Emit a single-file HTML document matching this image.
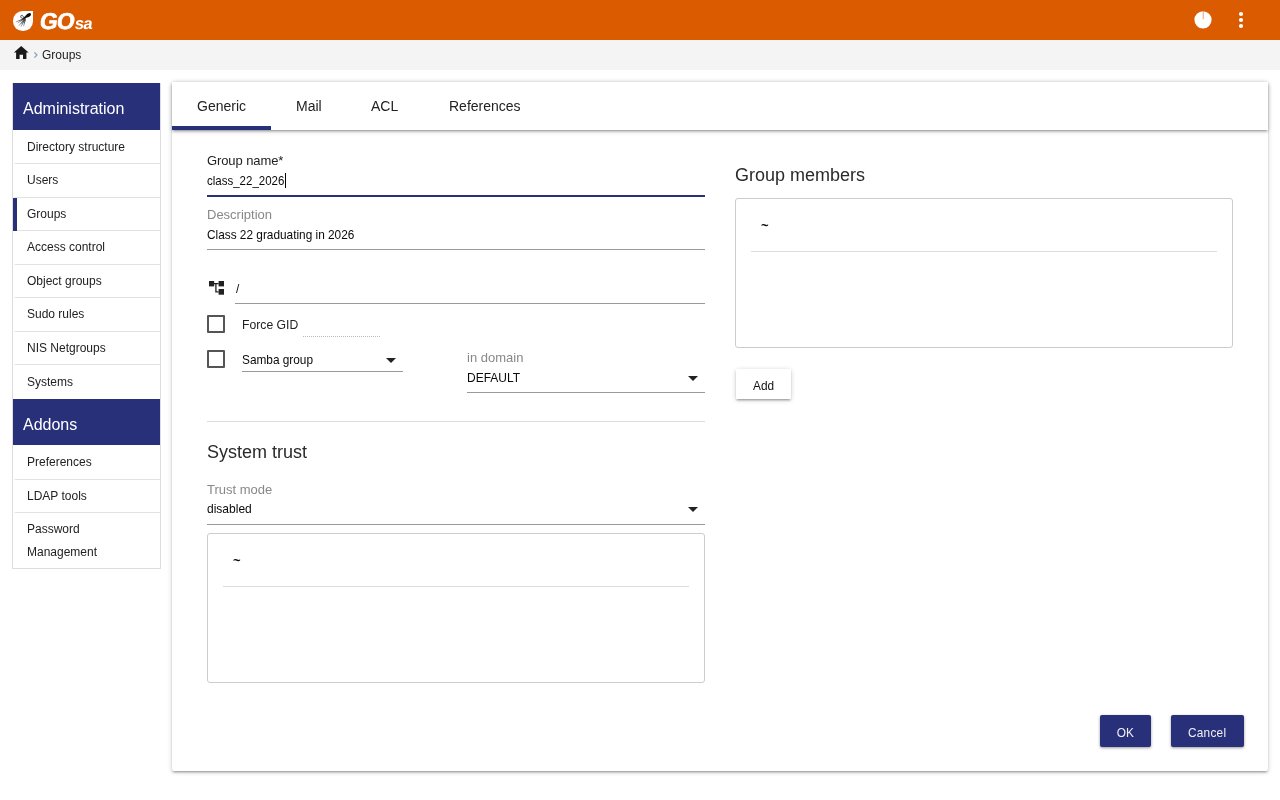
<!DOCTYPE html>
<html><head><meta charset="utf-8">
<style>
*{box-sizing:border-box;margin:0;padding:0}
html,body{width:1280px;height:800px;overflow:hidden;background:#fff;-webkit-font-smoothing:antialiased;font-family:"Liberation Sans",sans-serif;color:#222}
.abs{position:absolute}
#hdr{position:absolute;left:0;top:0;width:1280px;height:40px;background:#db5b00}
#crumb{position:absolute;left:0;top:40px;width:1280px;height:30px;background:#f4f4f4}
#side{position:absolute;left:12px;top:83px;width:149px;height:486px;border:1px solid #ddd;border-top:none;background:#fff}
.sh{position:absolute;left:0;width:147px;background:#29307a;color:#fff;font-size:16px;line-height:50px;padding-left:10px;padding-top:1px}
.si{position:absolute;left:0;width:147px;font-size:12px;padding-left:14px;color:#222}
.bb::after{content:"";position:absolute;left:1px;right:0;bottom:0;height:1px;background:linear-gradient(to right,rgba(226,226,226,.3),#e2e2e2 2px)}
#main{position:absolute;left:172px;top:82px;width:1096px;height:689px;background:#fff;box-shadow:0 2px 2px 0 rgba(0,0,0,.14),0 3px 1px -2px rgba(0,0,0,.12),0 1px 5px 0 rgba(0,0,0,.2);border-radius:2px}
#inner{position:absolute;left:0;top:1px;width:1096px;height:688px}
#tabs{position:absolute;left:0;top:-1px;width:1096px;height:48px;box-shadow:0 2px 2px 0 rgba(0,0,0,.14),0 3px 1px -2px rgba(0,0,0,.12),0 1px 5px 0 rgba(0,0,0,.2);background:#fff}
.tab{position:absolute;top:1px;height:47px;line-height:46px;font-size:14px;color:#222}
.lbl{position:absolute;font-size:13px;color:#222}
.glbl{position:absolute;font-size:13px;color:#888}
.val{position:absolute;font-size:13px;color:#0a0a0a}
.line{position:absolute;height:1px;background:#999}
.cb{position:absolute;width:18px;height:18px;border:2px solid #555;border-radius:1px}
.arrow{position:absolute;width:0;height:0;border-left:5.5px solid transparent;border-right:5.5px solid transparent;border-top:5.5px solid #222}
.h2{position:absolute;font-size:18px;color:#2a2a2a}
.cv{display:inline-block;transform:scaleX(0.91);transform-origin:0 0;white-space:nowrap}
.box{position:absolute;border:1px solid #ccc;border-radius:3px}
.btn{position:absolute;background:#29307a;color:#f0f0f4;font-size:13px;text-align:center;border-radius:2px;box-shadow:0 1px 3px rgba(0,0,0,.4)}
</style></head><body><div style="position:absolute;left:0;top:0;width:1280px;height:800px;will-change:transform">
<div id="hdr">
  <div class="abs" style="left:13px;top:11px;width:19.5px;height:19.5px;background:#fff;border-radius:50% 0 50% 50%"></div>
  <svg class="abs" style="left:13px;top:11px" width="20" height="20" viewBox="0 0 20 20">
    <defs><linearGradient id="tg" x1="1" y1="0" x2="0" y2="1"><stop offset="0.2" stop-color="#333"/><stop offset="1" stop-color="#bbb"/></linearGradient></defs>
    <ellipse cx="15.4" cy="4.2" rx="2.9" ry="1.7" transform="rotate(-30 15.4 4.2)" fill="#0a0a0a"/>
    <path d="M13.6 5.2 L11 7.6" stroke="#151515" stroke-width="2" stroke-linecap="round"/>
    <g stroke="url(#tg)" stroke-width="1" stroke-linecap="round" fill="none">
      <path d="M11 7.5 L5 12"/>
      <path d="M11.3 8 L6 14.5"/>
      <path d="M11.8 8.5 L8 15.5"/>
      <path d="M12.3 8.8 L10.5 15"/>
      <path d="M10.5 8 L3.2 10.8"/>
      <path d="M11.5 9 L7.8 13"/>
      <path d="M12.5 8.5 L12.5 13.5"/>
    </g>
    <path d="M10 7.8 C7.6 7.6 7.2 4.4 8.6 4.3 C9.8 4.2 10.6 5.5 10.3 6.8" stroke="#222" stroke-width="0.8" fill="none"/>
  </svg>
  <div class="abs" style="left:40px;top:6px;font-size:23px;font-weight:bold;color:#fff;line-height:30px;transform:skewX(-8deg);letter-spacing:-0.8px;-webkit-text-stroke:0.6px #fff">GO</div>
  <div class="abs" style="left:75px;top:11px;font-size:16.5px;font-weight:bold;color:#fff;line-height:24px;transform:skewX(-8deg);letter-spacing:-0.7px">sa</div>
  <svg class="abs" style="left:1192px;top:8px" width="24" height="24" viewBox="0 0 24 24">
    <circle cx="11" cy="11.8" r="8.6" fill="#fff"/>
    <rect x="10.8" y="3" width="0.7" height="8.2" fill="#e07a30"/>
  </svg>
  <svg class="abs" style="left:1236px;top:10px" width="10" height="20" viewBox="0 0 10 20">
    <circle cx="5" cy="4" r="2.1" fill="#fff"/>
    <circle cx="5" cy="10" r="2.1" fill="#fff"/>
    <circle cx="5" cy="16" r="2.1" fill="#fff"/>
  </svg>
</div>
<div id="crumb">
  <svg class="abs" style="left:13px;top:5px" width="17" height="15" viewBox="0 0 17 15">
    <path d="M8.2 0.9 L15.6 7.4 L13.4 7.4 L13.4 13.9 L10 13.9 L10 9.8 L6.6 9.8 L6.6 13.9 L3.1 13.9 L3.1 7.4 L0.9 7.4 Z" fill="#1a1a1a"/>
  </svg>
  <svg class="abs" style="left:33px;top:11px" width="6" height="8" viewBox="0 0 6 8">
    <path d="M1.4 1.4 L4 4 L1.4 6.6" stroke="#8a9db5" stroke-width="1.2" fill="none"/>
  </svg>
  <div class="abs" style="left:42px;top:7px;font-size:12px;line-height:16px;color:#222">Groups</div>
</div>
<div id="side">
  <div class="sh" style="top:0;height:47px">Administration</div>
  <div class="si bb" style="top:47px;height:34px;line-height:33px;padding-top:1px">Directory structure</div>
  <div class="si bb" style="top:81px;height:34px;line-height:33px">Users</div>
  <div class="si bb" style="top:115px;height:33px;line-height:32px">Groups</div>
  <div class="si bb" style="top:148px;height:34px;line-height:33px">Access control</div>
  <div class="si bb" style="top:182px;height:33px;line-height:32px">Object groups</div>
  <div class="si bb" style="top:215px;height:34px;line-height:33px">Sudo rules</div>
  <div class="si bb" style="top:249px;height:33px;line-height:32px">NIS Netgroups</div>
  <div class="si" style="top:282px;height:34px;line-height:34px">Systems</div>
  <div class="abs" style="left:0;top:115px;width:4px;height:33px;background:#29307a"></div>
  <div class="sh" style="top:316px;height:46px">Addons</div>
  <div class="si bb" style="top:362px;height:35px;line-height:34px">Preferences</div>
  <div class="si bb" style="top:397px;height:33px;line-height:32px">LDAP tools</div>
  <div class="si" style="top:430px;height:55px;line-height:23px;padding-top:5px">Password<br>Management</div>
</div>
<div id="main"><div id="inner">
  <div id="tabs">
    <div class="tab" style="left:25px">Generic</div>
    <div class="tab" style="left:124px">Mail</div>
    <div class="tab" style="left:199px">ACL</div>
    <div class="tab" style="left:277px">References</div>
  </div>

  <div id="tabline" class="abs" style="left:0;top:43px;width:99px;height:4px;background:#29307a"></div>
  <!-- left column -->
  <div class="lbl" style="left:35px;top:70px;letter-spacing:-0.1px">Group name*</div>
  <div class="val" style="left:35px;top:90px"><span class="cv" style="transform:scaleX(0.885)">class_22_2026</span></div>
  <div class="abs" style="left:113px;top:90px;width:1px;height:15px;background:#000"></div>
  <div class="abs" style="left:35px;top:112px;width:498px;height:2px;background:#29307a"></div>
  <div class="glbl" style="left:35px;top:124px">Description</div>
  <div class="val" style="left:35px;top:144px"><span class="cv">Class 22 graduating in 2026</span></div>
  <div class="line" style="left:35px;top:166px;width:498px"></div>
  <svg class="abs" style="left:36px;top:198px" width="17" height="15" viewBox="0 0 17 15">
    <rect x="1" y="0" width="5.2" height="5.4" fill="#222"/>
    <rect x="10.6" y="0" width="5.4" height="5.4" fill="#222"/>
    <rect x="10.6" y="8" width="5.4" height="5.7" fill="#222"/>
    <path d="M6 2.7 H10.6 M7.9 2.7 V10.9 H10.6" stroke="#222" stroke-width="1.3" fill="none"/>
  </svg>
  <div class="val" style="left:64px;top:198px"><span class="cv">/</span></div>
  <div class="line" style="left:63px;top:220px;width:470px"></div>
  <div class="cb" style="left:35px;top:232px"></div>
  <div class="lbl" style="left:70px;top:235px;font-size:12.2px">Force GID</div>
  <div class="abs" style="left:131px;top:253px;width:77px;height:0;border-top:1px dotted #bbb"></div>
  <div class="cb" style="left:35px;top:267px"></div>
  <div class="val" style="left:70px;top:269px"><span class="cv">Samba group</span></div>
  <div class="arrow" style="left:214px;top:275px"></div>
  <div class="line" style="left:70px;top:288px;width:161px"></div>
  <div class="glbl" style="left:295px;top:267px">in domain</div>
  <div class="val" style="left:295px;top:288px;font-size:12px">DEFAULT</div>
  <div class="arrow" style="left:516px;top:293px"></div>
  <div class="line" style="left:295px;top:309px;width:238px"></div>
  <div class="abs" style="left:35px;top:338px;width:498px;height:1px;background:#ddd"></div>
  <div class="h2" style="left:35px;top:359px">System trust</div>
  <div class="glbl" style="left:35px;top:399px">Trust mode</div>
  <div class="val" style="left:35px;top:418px"><span class="cv" style="transform:scaleX(0.925)">disabled</span></div>
  <div class="arrow" style="left:516px;top:424px"></div>
  <div class="line" style="left:35px;top:441px;width:498px"></div>
  <div class="box" style="left:35px;top:450px;width:498px;height:150px">
    <div class="val" style="left:25px;top:18.5px;font-weight:bold">~</div>
    <div class="abs" style="left:15px;top:52px;width:466px;height:1px;background:#ddd"></div>
  </div>
  <!-- right column -->
  <div class="h2" style="left:563px;top:82px">Group members</div>
  <div class="box" style="left:563px;top:115px;width:498px;height:150px">
    <div class="val" style="left:25px;top:18.5px;font-weight:bold">~</div>
    <div class="abs" style="left:15px;top:52px;width:466px;height:1px;background:#ddd"></div>
  </div>
  <div class="abs" style="left:564px;top:286px;width:55px;height:30px;background:#fff;box-shadow:0 2px 2px rgba(0,0,0,.14),0 3px 1px -2px rgba(0,0,0,.12),0 1px 5px rgba(0,0,0,.2);border-radius:1px;font-size:13px;text-align:center;line-height:30px;padding-top:2px;color:#111"><span class="cv" style="transform-origin:50% 0">Add</span></div>
  <div class="btn" style="left:928px;top:632px;width:51px;height:32px;line-height:32px;padding-top:2px"><span class="cv" style="transform-origin:50% 0">OK</span></div>
  <div class="btn" style="left:999px;top:632px;width:73px;height:32px;line-height:32px;padding-top:2px"><span class="cv" style="transform-origin:50% 0;letter-spacing:0.3px">Cancel</span></div>
</div></div>
</div></body></html>
